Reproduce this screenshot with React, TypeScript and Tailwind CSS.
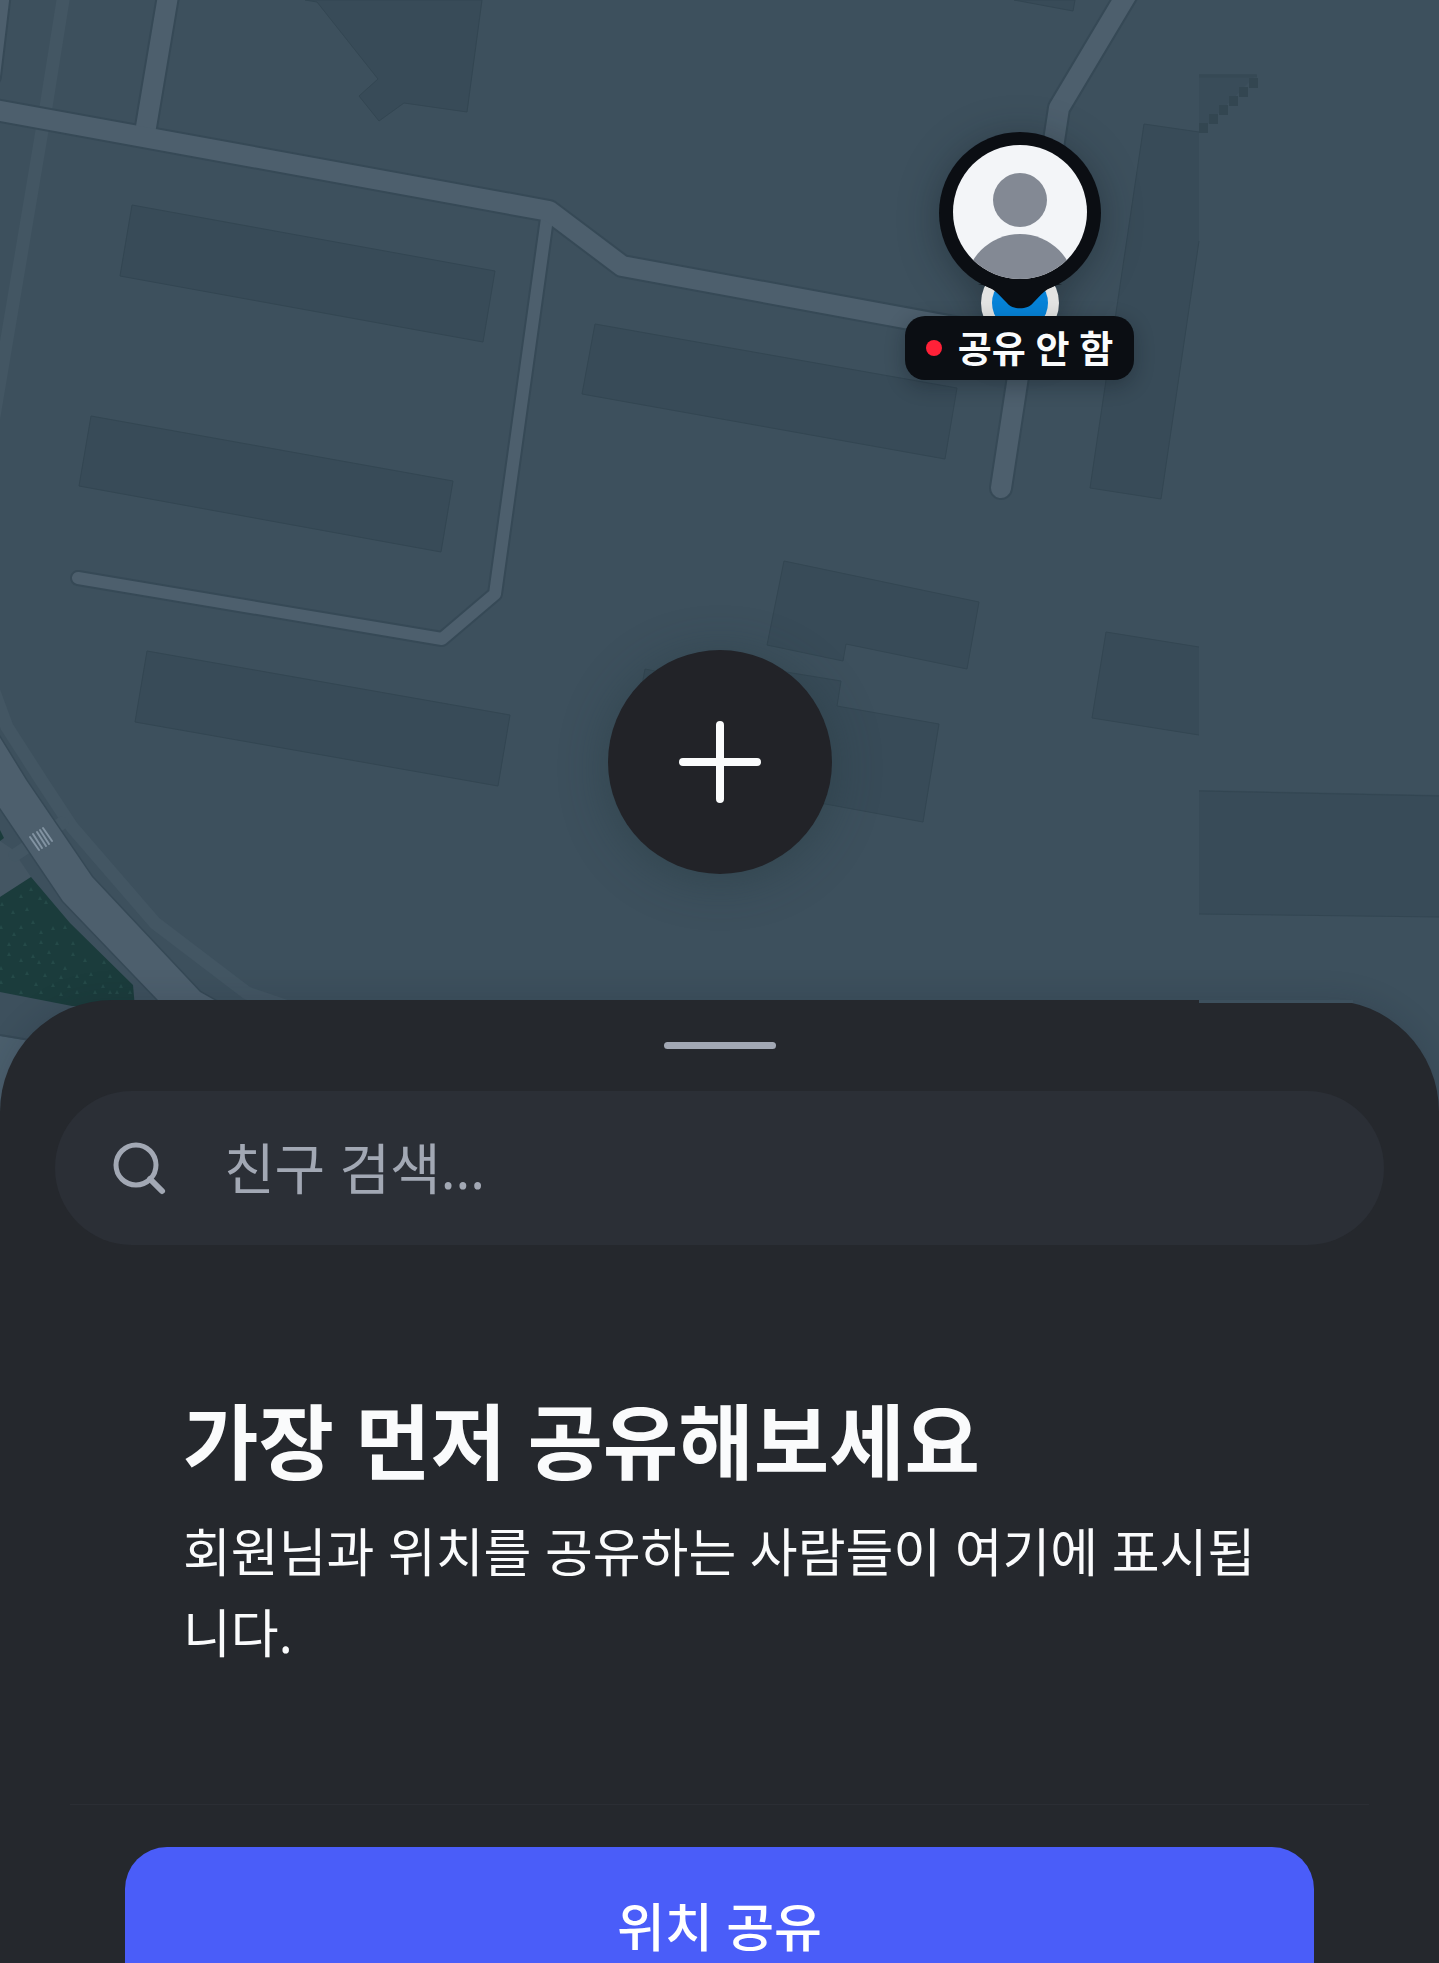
const buildings = [
  '305,0 317,2 378,79 359,96 379,121 404,103 467,112 482,0',
  '132,205 495,271 483,342 120,276',
  '91,416 453,481 441,552 79,486',
  '595,324 957,388 945,459 582,394',
  '147,651 510,715 498,786 135,722',
  '1014,0 1073,11 1075,0',
  '784,561 979,602 967,669 846,644 843,661 767,645',
  '645,669 700,680 700,760 632,740',
  '780,671 841,681 837,706 939,724 923,822 820,803 760,760',
]

// buildings cut off by the edge of a map tile
const cutBuildings = [
  { area: '1144,124 1199,132 1199,241 1161,499 1090,488', edge: 'M1199 132L1144 124L1090 488L1161 499L1199 241' },
  { area: '1106,632 1199,647 1199,735 1092,718', edge: 'M1199 647L1106 632L1092 718L1199 735' },
  { area: '1199,790 1439,795 1439,917 1199,914', edge: 'M1199 791L1439 796M1199 914L1439 917' },
]

const roads = [
  { d: 'M0 -8L-10 76', width: 20 },
  { d: 'M169 -10L146 127', width: 20 },
  { d: 'M548 211L495 594L442 639L78 578', width: 12 },
  { d: 'M-10 109L549 211L622 266L1030 341', width: 20 },
  { d: 'M1127 -6L1059 108L1001 488', width: 20 },
]

const paths = ['M64 -6L46 107L-8 428', 'M-14 670L7 727L43 783L72 827L155 923L247 993L285 1006', 'M15 855L62 823']

const mainStreet = '-6,728 26,780 92,877 200,992 232,1010 167,1010 158,1000 63,901 -6,799'

const trees = [
  [2, 904], [31, 889], [21, 896], [40, 898], [27, 909], [13, 912], [46, 902], [33, 922], [1, 927], [21, 927],
  [53, 928], [65, 927], [14, 934], [41, 932], [41, 942], [25, 944], [9, 944], [57, 943], [73, 943], [9, 954],
  [73, 954], [49, 952], [33, 956], [21, 960], [85, 960], [39, 962], [53, 962], [104, 962], [1, 968], [65, 968],
  [13, 976], [27, 973], [45, 975], [61, 977], [77, 976], [91, 974], [110, 976], [1, 982], [85, 982], [36, 984],
  [53, 985], [69, 986], [103, 986], [121, 986], [21, 992], [41, 992], [61, 994], [77, 992], [95, 992], [110, 992],
  [117, 992], [130, 992],
]

function MapCanvas() {
  return (
    <svg
      className="absolute inset-x-0 top-0 h-[1120px] w-full"
      viewBox="0 0 1439 1120"
      preserveAspectRatio="xMidYMin slice"
      aria-hidden="true"
    >
      <rect width="1439" height="1120" fill="#3d505d" />

      <polygon points="0,841 12,849 31,877 0,897" fill="#445663" />
      <g fill="none" stroke="#435663" strokeLinecap="round" strokeLinejoin="round">
        {paths.map((d) => (
          <path key={d} d={d} strokeWidth="13" />
        ))}
      </g>
      <polygon points="0,897 31,877 70,923 133,985 135,1008 72,1006 0,992" fill="#1b3c3c" />
      <polygon points="0,830 4,838 0,841" fill="#1b3c3c" />
      <g fill="#254a48">
        {trees.map(([x, y]) => (
          <path key={`${x}-${y}`} d={`M${x} ${y - 2}l2 4h-4z`} />
        ))}
      </g>
      <path d="M0 1036L60 1046V1120H0Z" fill="#4b5f6d" />
      <path d="M0 1035L60 1045" stroke="#364956" strokeWidth="2" />

      <g fill="#384b58" stroke="#334652" strokeWidth="1">
        {buildings.map((points) => (
          <polygon key={points} points={points} />
        ))}
      </g>
      {cutBuildings.map((b) => (
        <g key={b.edge}>
          <polygon points={b.area} fill="#384b58" />
          <path d={b.edge} fill="none" stroke="#334652" strokeWidth="1" />
        </g>
      ))}

      <polygon points="1199,74 1257,74 1199,133" fill="#394c59" />
      <path d="M1199 76H1257" stroke="#364955" strokeWidth="3" />
      <g fill="#334651">
        {[0, 1, 2, 3, 4, 5].map((i) => (
          <rect key={i} x={1199 + i * 10} y={123 - i * 9} width="9" height="10" />
        ))}
      </g>

      <g fill="none" stroke="#364956" strokeLinecap="round" strokeLinejoin="round">
        {roads.map((r) => (
          <path key={r.d} d={r.d} strokeWidth={r.width + 4} />
        ))}
        <polygon points={mainStreet} strokeWidth="3" />
      </g>
      <g fill="none" stroke="#4d5f6d" strokeLinecap="round" strokeLinejoin="round">
        {roads.map((r) => (
          <path key={r.d} d={r.d} strokeWidth={r.width} />
        ))}
      </g>
      <polygon points={mainStreet} fill="#4d5f6d" />
      <path
        d="M30 837l9 13M33 834l9 14M37 832l9 14M40 830l9 14M43 828l9 13"
        stroke="#8293a2"
        strokeWidth="2"
        strokeLinecap="round"
      />
    </svg>
  )
}

function MyLocation() {
  return (
    <div className="absolute left-[70.85%] top-[132px] flex w-60 -translate-x-1/2 flex-col items-center">
      <svg
        className="h-[184px] w-[162px] overflow-visible drop-shadow-[0_6px_20px_rgba(10,18,24,0.35)]"
        viewBox="0 0 162 184"
        aria-hidden="true"
      >
        <circle cx="81" cy="171" r="39" fill="#e3e4e3" />
        <circle cx="81" cy="171" r="28" fill="#0683d8" />
        <circle cx="81" cy="81" r="81" fill="#0b0e13" />
        <path d="M39 152C54 154 60 163 68 171C73 178 89 178 94 171C102 163 108 154 123 152Z" fill="#0b0e13" />
        <clipPath id="avatar">
          <circle cx="81" cy="80" r="67" />
        </clipPath>
        <g clipPath="url(#avatar)">
          <rect width="162" height="162" fill="#f3f5f8" />
          <circle cx="81" cy="68" r="27" fill="#838994" />
          <circle cx="81" cy="157" r="55" fill="#838994" />
        </g>
      </svg>
      <div className="relative flex h-16 items-center gap-4 rounded-[20px] bg-[#0b0e13] px-[21px] shadow-[0_6px_20px_rgba(10,18,24,0.3)]">
        <span className="size-4 rounded-full bg-[#ff2138]" />
        <span className="whitespace-nowrap text-[37px] leading-none font-bold text-[#fafbfc]">공유 안 함</span>
      </div>
    </div>
  )
}

function BottomSheet() {
  return (
    <section className="relative flex-1 rounded-t-[112px] bg-[#25282d] shadow-[0_-2px_30px_rgba(20,30,38,0.15)]">
      <div className="absolute right-[86px] top-0 h-[3px] w-[154px] bg-[#3d505d]" />
      <div className="mx-auto h-[91px] w-28 pt-[42px]">
        <div className="h-[7px] rounded-full bg-[#a2a8b4]" />
      </div>

      <label className="mx-[55px] flex h-[154px] items-center gap-[57px] rounded-full bg-[#2b2f36] px-[56px]">
        <svg className="size-14 shrink-0" viewBox="0 0 56 56" fill="none" stroke="#a2a8b4" strokeLinecap="round">
          <circle cx="25" cy="25" r="20" strokeWidth="5" />
          <path d="M39 39L51 51" strokeWidth="6" />
        </svg>
        <input
          type="text"
          aria-label="친구 검색"
          placeholder="친구 검색..."
          className="h-20 min-w-0 flex-1 bg-transparent text-[55px] text-white outline-none placeholder:text-[#a2a8b4]"
        />
      </label>

      <div className="px-[183px] pt-[136px]">
        <h1 className="text-[82px] leading-[120px] font-bold text-[#fafbfc]">가장 먼저 공유해보세요</h1>
        <p className="mt-[10px] break-all text-[52px] leading-[81px] text-[#fafbfc]">
          회원님과 위치를 공유하는 사람들이 여기에 표시됩니다.
        </p>
      </div>

      <div className="mx-[70px] mt-[131px] border-t border-[#2b2e34]" />
      <div className="px-[125px] pt-[42px]">
        <button
          type="button"
          className="h-40 w-full rounded-[42px] bg-[#4a5df9] text-[52px] leading-none font-medium text-white"
        >
          위치 공유
        </button>
      </div>
    </section>
  )
}

export default function App() {
  return (
    <main className="flex h-screen flex-col overflow-hidden bg-[#3d505d] font-['Noto_Sans','Noto_Sans_CJK_KR',sans-serif]">
      <div className="relative h-[1000px] shrink-0">
        <MapCanvas />
        <MyLocation />
        <button
          type="button"
          aria-label="추가"
          className="absolute left-1/2 top-[650px] flex size-56 -translate-x-1/2 items-center justify-center rounded-full bg-[#222328] shadow-[0_6px_48px_rgba(35,55,60,0.45)]"
        >
          <svg className="size-[82px]" viewBox="0 0 82 82" fill="none" stroke="#fafbfc" strokeLinecap="round" aria-hidden="true">
            <path d="M41 4V78M4 41H78" strokeWidth="8" />
          </svg>
        </button>
      </div>
      <BottomSheet />
    </main>
  )
}
